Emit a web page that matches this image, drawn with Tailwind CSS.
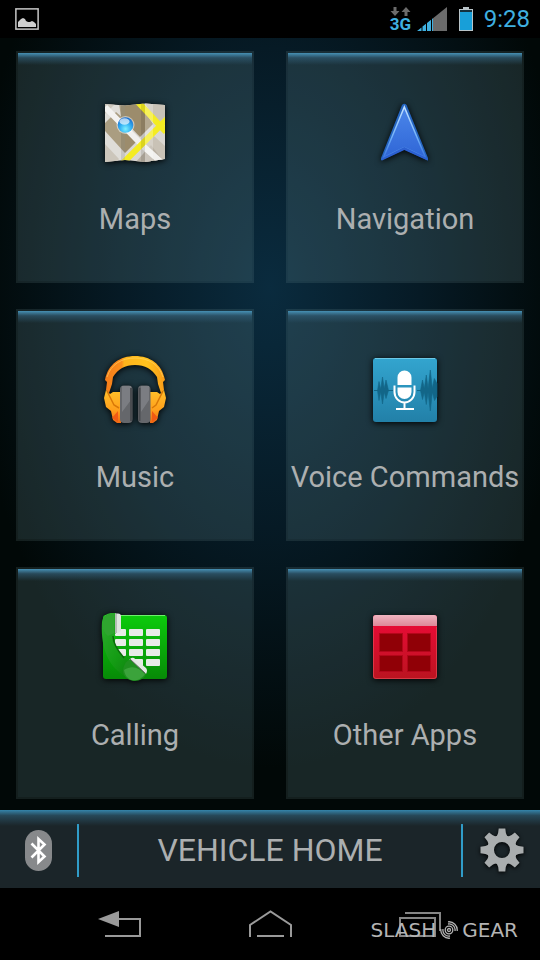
<!DOCTYPE html>
<html lang="en">
<head>
  <meta charset="UTF-8">
  <meta name="viewport" content="width=device-width, initial-scale=1.0">
  <script src="https://cdn.jsdelivr.net/npm/@tailwindcss/browser@4"></script>
  <title>Vehicle Home</title>
</head>
<body class="bg-black font-[Roboto,sans-serif] text-[#acafb0]">
<div class="min-h-screen flex flex-col">

  <!-- Status bar -->
  <header class="h-[38px] bg-black flex justify-between items-center pl-[15px] pr-[10px]">
    <svg class="w-6 h-[22px]" viewBox="0 0 24 22" aria-label="Screenshot saved">
      <rect x="0.5" y="0.5" width="23" height="21" fill="#000" stroke="#777"/>
      <rect x="1" y="1" width="22" height="20" fill="none" stroke="#d0d0d0" stroke-width="1.2"/>
      <path d="M3 19V14l2-2 1-1 2-1 2 1 1 2 2 1h2l2-1 2 1 2 2v3z" fill="#d0d0d0"/>
    </svg>
    <div class="flex items-center">
      <div class="w-[22px] h-6 mr-[5px]">
        <svg class="w-[22px] h-[9px]" viewBox="0 0 22 9" fill="#6b6b6b" aria-hidden="true">
          <path d="M3.500 0h3v4h3L5 9 .5 4h3z"/>
          <path d="M14.500 9h3V5h3L16 0l-4.500 5h3z"/>
        </svg>
        <span class="block text-[17px] leading-4 font-bold text-[#3fb0e0]">3G</span>
      </div>
      <svg class="w-[30px] h-6 mr-3" viewBox="0 0 30 24" aria-label="Signal strength">
        <path d="M16 11.200 30 0v24H16z" fill="#6b6b6b"/>
        <path d="M0 24l4.500-3.600V24zM5.500 19.600 9 16.800V24H5.500zM10 16l4-3.200V24h-4zM15 12l1-.8V24h-1z" fill="#3fb0e0"/>
      </svg>
      <svg class="w-[14px] h-6 mr-[11px]" viewBox="0 0 14 24" aria-label="Battery">
        <path d="M4 0h6v2h4v22H0V2h4z" fill="#b9c4c8"/>
        <rect x="1" y="3" width="12" height="20" fill="#14303c"/>
        <rect x="1" y="5" width="12" height="18" fill="#189fd8"/>
      </svg>
      <time class="text-2xl leading-6 text-[#3fb0e0]">9:28</time>
    </div>
  </header>

  <!-- App tiles -->
  <main class="flex-1 grid grid-cols-2 gap-x-8 gap-y-[26px] px-4 pt-[13px] pb-[11px] bg-[radial-gradient(ellipse_300px_480px_at_50%_250px,#0a2b3e,#061a25_50%,#010807_100%)]">

    <a href="#maps" class="relative flex flex-col items-center pt-11 pb-11 border-2 border-[#8aa]/15 bg-[#6c9196]/22 bg-clip-padding">
      <span class="absolute inset-x-0 top-0 h-3 bg-linear-to-b from-[#4690b4] via-[#33607a]/60 via-40% to-transparent"></span>
      <svg class="w-[72px] h-[72px] drop-shadow-[0_1px_3px_#000]" viewBox="0 0 72 72" aria-hidden="true">
        <defs>
          <clipPath id="mapSheet"><path d="M6 7l20 1.500L46 6.500 66 8v54l-20 3-20-2-20 2z"/></clipPath>
          <radialGradient id="mapPin" cx=".5" cy=".75" r=".7">
            <stop offset="0" stop-color="#7ff0ff"/><stop offset=".5" stop-color="#35b4f5"/><stop offset="1" stop-color="#1a6fd0"/>
          </radialGradient>
        </defs>
        <g clip-path="url(#mapSheet)">
          <path fill="#dad7d2" d="M6 6h60v60H6z"/>
          <path fill="#c4bdb0" d="M6 6h11L6 17zM6 47l14 15-3 4H6z"/>
          <path fill="#9c8c6c" d="M6 26l11-11 9 8 6 10 8 9-14 14-20-22z"/>
          <path fill="#9c8c6c" d="M20 6h20l14 21-13 13-19-20z"/>
          <path fill="#c9c2b6" d="M46 6h20v14l-8 8zM46 48l9-9 11 10v17H46z"/>
          <path fill="#b9b1a4" d="M36 66l16-18 14 18z"/>
          <path stroke="#f1f0ee" stroke-width="6" d="M6 10l36 37M43 48l20 18" fill="none"/>
          <path stroke="#f4ec22" stroke-width="6" d="M22 68l46-46M37 3l30 32" fill="none"/>
          <path fill="#fff" opacity=".15" d="M6 6h20v60H6z"/>
          <path fill="#000" opacity=".1" d="M22 6h4v60h-4zM42 6h4v60h-4z"/>
          <path fill="#fff" opacity=".25" d="M46 6h8v60h-8z"/>
        </g>
        <circle cx="26.500" cy="28" r="9" fill="#fff" opacity=".5"/>
        <circle cx="26.500" cy="28" r="7.800" fill="url(#mapPin)"/>
        <ellipse cx="25.500" cy="24.500" rx="5" ry="3.200" fill="#fff" opacity=".65"/>
      </svg>
      <span class="mt-8 text-[29px] leading-9 whitespace-nowrap">Maps</span>
    </a>

    <a href="#navigation" class="relative flex flex-col items-center pt-11 pb-11 border-2 border-[#8aa]/15 bg-[#6c9196]/22 bg-clip-padding">
      <span class="absolute inset-x-0 top-0 h-3 bg-linear-to-b from-[#4690b4] via-[#33607a]/60 via-40% to-transparent"></span>
      <svg class="w-[72px] h-[72px] drop-shadow-[0_1px_3px_#000]" viewBox="0 0 72 72" aria-hidden="true">
        <defs>
          <linearGradient id="navFill" x2="0" y2="1"><stop offset="0" stop-color="#4b86ea"/><stop offset="1" stop-color="#2f66d6"/></linearGradient>
          <linearGradient id="navEdge" x2="0" y2="1"><stop offset="0" stop-color="#c5e2ff"/><stop offset=".6" stop-color="#6fb0f8"/><stop offset="1" stop-color="#3a74e0"/></linearGradient>
        </defs>
        <path d="M33 8q2.300-2.500 4.600 0L59 61v2.500L35.300 52.500 12 63.500V61z" fill="#2565c0"/>
        <path d="M35.300 10 14.500 60.500 35.300 50.500 56.500 60.500z" fill="url(#navFill)" stroke="url(#navEdge)" stroke-width="1.500"/>
        <path d="M35.300 50 13 61.500V63.500L35.300 53 58.500 63.500V61.500z" fill="#2c60d0"/>
      </svg>
      <span class="mt-8 text-[29px] leading-9 whitespace-nowrap">Navigation</span>
    </a>

    <a href="#music" class="relative flex flex-col items-center pt-11 pb-11 border-2 border-[#8aa]/15 bg-[#6c9196]/22 bg-clip-padding">
      <span class="absolute inset-x-0 top-0 h-3 bg-linear-to-b from-[#4690b4] via-[#33607a]/60 via-40% to-transparent"></span>
      <svg class="w-[72px] h-[72px] drop-shadow-[0_1px_3px_#000]" viewBox="0 0 72 72" aria-hidden="true">
        <defs>
          <linearGradient id="band" x2="1" y2="0"><stop offset="0" stop-color="#f57c1a"/><stop offset=".28" stop-color="#fb8f1c"/><stop offset=".32" stop-color="#ffb41c"/><stop offset=".7" stop-color="#ffc21e"/><stop offset="1" stop-color="#f89a18"/></linearGradient>
          <linearGradient id="cup" x2="0" y2="1"><stop offset="0" stop-color="#ffc02a"/><stop offset=".6" stop-color="#ffa01c"/><stop offset="1" stop-color="#f06a14"/></linearGradient>
        </defs>
        <path d="M6 25C9 9 21 1 36 1s27 8 30 24l-2 2 1 8-3 3-3-9-1-7C53 14 46 10 36 10S19 14 14 22l-1 7-3 9-3-3 1-8z" fill="url(#band)"/>
        <path d="M8 22C12 9 23 3 36 3s24 6 28 19" fill="none" stroke="#ffd968" opacity=".6"/>
        <path d="M7 35l4 4 3-2h8v31h-4l-4-3-2-9-5-4-2-9z" fill="url(#cup)"/>
        <path d="M65 35l-4 4-3-2h-7v31h3l4-3 2-9 5-4 2-9z" fill="url(#cup)"/>
        <path d="M8 36l7 14 5 3M64 36l-7 14-4 3" fill="none" stroke="#d97808" stroke-width="1.500"/>
        <path d="M13 63l6-7v11zM59 63l-6-7v11z" fill="#f05a14"/>
        <rect x="21" y="30.500" width="12.500" height="37.500" rx="4" fill="#65676b"/>
        <rect x="39" y="30.500" width="12.500" height="37.500" rx="4" fill="#65676b"/>
        <path d="M23 31h9v14L23 57zM42 31h8v14l-8 12z" fill="#85878b" opacity=".7"/>
        <path d="M32 33v33M40.500 33v33" stroke="#4a4c50" stroke-width="2"/>
      </svg>
      <span class="mt-8 text-[29px] leading-9 whitespace-nowrap">Music</span>
    </a>

    <a href="#voice" class="relative flex flex-col items-center pt-11 pb-11 border-2 border-[#8aa]/15 bg-[#6c9196]/22 bg-clip-padding">
      <span class="absolute inset-x-0 top-0 h-3 bg-linear-to-b from-[#4690b4] via-[#33607a]/60 via-40% to-transparent"></span>
      <svg class="w-[72px] h-[72px] drop-shadow-[0_1px_3px_#000]" viewBox="0 0 72 72" aria-hidden="true">
        <defs>
          <linearGradient id="voiceFill" x2="0" y2="1"><stop offset="0" stop-color="#33a5cf"/><stop offset="1" stop-color="#2280a8"/></linearGradient>
        </defs>
        <rect x="4" y="3" width="64" height="64" rx="3" fill="url(#voiceFill)"/>
        <path d="M6 3.500h60" stroke="#6cc8e6"/>
        <path d="M5 35.500h19M48 35.500h20" stroke="#126688"/>
        <path d="M8.500 35.500l1.500-9 2 9-2 10zM11.500 35.500l2-13.500 2 13.500-2 13.500zM14.800 35.500l2.200-10.500 2.500 10.500-2.500 8zM51.500 35.500l2-10.500 2.200 10.500-2.200 9zM55 35.500l2.300-15.500 2 15.500-2 14zM58.800 35.500l2.500-20.500 2.200 20.500-2.200 20.500zM62.800 35.500l2.500-12 2.700 5v13l-2.500 4z" fill="#126688" stroke="#126688" stroke-width=".6"/>
        <path d="M28.500 30V22.500a7 7 0 0 1 14 0V30zM28.500 32.500h14V37a7 7 0 0 1-14 0z" fill="#fff"/>
        <path d="M25.500 30.500V37a10 10.500 0 0 0 20 0V30.500M35.500 47.500V54M27 54h18" fill="none" stroke="#fff" stroke-width="2"/>
      </svg>
      <span class="mt-8 text-[29px] leading-9 whitespace-nowrap">Voice Commands</span>
    </a>

    <a href="#calling" class="relative flex flex-col items-center pt-11 pb-11 border-2 border-[#8aa]/15 bg-[#6c9196]/22 bg-clip-padding">
      <span class="absolute inset-x-0 top-0 h-3 bg-linear-to-b from-[#4690b4] via-[#33607a]/60 via-40% to-transparent"></span>
      <svg class="w-[72px] h-[72px] drop-shadow-[0_1px_3px_#000]" viewBox="0 0 72 72" aria-hidden="true">
        <defs>
          <linearGradient id="callFill" x2="0" y2="1"><stop offset="0" stop-color="#0ccb0c"/><stop offset="1" stop-color="#078a07"/></linearGradient>
          <linearGradient id="handset" x2="1" y2="1"><stop offset="0" stop-color="#2fae2f"/><stop offset=".5" stop-color="#149c14"/><stop offset="1" stop-color="#0c6e0c"/></linearGradient>
        </defs>
        <rect x="4" y="2" width="64" height="64" rx="3" fill="url(#callFill)"/>
        <path d="M6 2.500h60" stroke="#6cf06c"/>
        <g fill="#e8ece8">
          <rect x="16" y="16" width="11" height="7" rx="1"/><rect x="30" y="16" width="14" height="7" rx="1"/><rect x="47" y="16" width="14" height="7" rx="1"/>
          <rect x="16" y="26" width="11" height="7" rx="1"/><rect x="30" y="26" width="14" height="7" rx="1"/><rect x="47" y="26" width="14" height="7" rx="1"/>
          <rect x="16" y="36" width="11" height="7" rx="1"/><rect x="30" y="36" width="14" height="7" rx="1"/><rect x="47" y="36" width="14" height="7" rx="1"/>
          <rect x="30" y="46" width="14" height="7" rx="1"/><rect x="47" y="46" width="14" height="7" rx="1"/>
        </g>
        <path d="M3 9C4 2 9-1 17 0v20l-3 3c0 7 5 15 11 22l22 15c-3 6-11 8-17 5C12 57 1 38 3 9z" fill="url(#handset)"/>
        <path d="M14 23c0 7 5 15 11 22" stroke="#0a6a0a" stroke-width="1.500" fill="none"/>
        <path d="M4 9c1-6 5-8 11-8v19l-6 3C5 20 3 15 4 9z" fill="#2fa52f"/>
        <path d="M16 .5h3q3 0 3 3V17q0 2-3 3h-3z" fill="#dfe5df"/>
        <path d="M17 1v19" stroke="#8b958b"/>
        <path d="M31 46l16 13.500c0 5-6 8.500-12 8.500-7-1-11-5-11-10 0-5 3-10 7-12z" fill="#1f8f1f"/>
        <path d="M25 57c8-5 14-3 21 4-6 9-19 9-21-4z" fill="#4fb04f" opacity=".6"/>
        <path d="M31 46q2-2 4-1l12 10q2 2 0 6z" fill="#e4eae4"/>
        <path d="M31 46l15.500 14.500" stroke="#5d6b5d"/>
      </svg>
      <span class="mt-8 text-[29px] leading-9 whitespace-nowrap">Calling</span>
    </a>

    <a href="#apps" class="relative flex flex-col items-center pt-11 pb-11 border-2 border-[#8aa]/15 bg-[#6c9196]/22 bg-clip-padding">
      <span class="absolute inset-x-0 top-0 h-3 bg-linear-to-b from-[#4690b4] via-[#33607a]/60 via-40% to-transparent"></span>
      <svg class="w-[72px] h-[72px] drop-shadow-[0_1px_3px_#000]" viewBox="0 0 72 72" aria-hidden="true">
        <defs>
          <linearGradient id="appsFill" x2="0" y2="1"><stop offset="0" stop-color="#ee0a38"/><stop offset="1" stop-color="#bb1420"/></linearGradient>
          <linearGradient id="appsBar" x2="0" y2="1"><stop offset="0" stop-color="#f0b4c0"/><stop offset="1" stop-color="#dd8898"/></linearGradient>
        </defs>
        <rect x="4" y="2" width="64" height="64" rx="3" fill="url(#appsFill)"/>
        <path d="M4 13V5q0-3 3-3h58q3 0 3 3v8z" fill="url(#appsBar)"/>
        <path d="M4.500 14v49q0 2.500 2.500 2.500h58q2.500 0 2.500-2.500V14" fill="none" stroke="#e8505c" opacity=".6"/>
        <g fill="#900006" stroke="#b4061a">
          <rect x="10.500" y="20.500" width="23" height="18"/><rect x="38.500" y="20.500" width="23" height="18"/>
          <rect x="10.500" y="42.500" width="23" height="16"/><rect x="38.500" y="42.500" width="23" height="16"/>
        </g>
      </svg>
      <span class="mt-8 text-[29px] leading-9 whitespace-nowrap">Other Apps</span>
    </a>
  </main>

  <!-- Dock bar -->
  <section class="relative h-[78px] pt-0.5 bg-[#1b2529] flex items-center">
    <span class="absolute inset-x-0 top-0 h-4 bg-linear-to-b from-[#3484aa] via-[#2b566c]/70 via-35% to-transparent"></span>
    <button type="button" aria-label="Bluetooth" class="w-[77px] flex justify-center">
      <svg class="w-[27px] h-[41px]" viewBox="0 0 27 41">
        <rect width="27" height="41" rx="13.500" fill="#87898b"/>
        <path d="M6.500 13.500 19.500 26.500 13.500 32V9L19.500 14.500 6.500 27.500" fill="none" stroke="#fff" stroke-width="2.600"/>
      </svg>
    </button>
    <span class="w-0.5 h-[53px] bg-[#309cc8]"></span>
    <h1 class="flex-1 text-center text-[32px] leading-10">VEHICLE HOME</h1>
    <span class="w-0.5 h-[53px] bg-[#309cc8]"></span>
    <button type="button" aria-label="Settings" class="w-[77px] flex justify-center">
      <svg class="w-11 h-11 drop-shadow-[0_1px_2px_#000]" viewBox="-22 -22 44 44" fill="#a9adae">
        <path fill-rule="evenodd" d="M0-15a15 15 0 1 0 0 30 15 15 0 1 0 0-30zm0 7a8 8 0 1 1 0 16 8 8 0 1 1 0-16z"/>
        <path id="tooth" d="M-5.500-13Q-3.500-16-3.300-21.500H3.300Q3.500-16 5.500-13z"/>
        <use href="#tooth" transform="rotate(45)"/>
        <use href="#tooth" transform="rotate(90)"/>
        <use href="#tooth" transform="rotate(135)"/>
        <use href="#tooth" transform="rotate(180)"/>
        <use href="#tooth" transform="rotate(225)"/>
        <use href="#tooth" transform="rotate(270)"/>
        <use href="#tooth" transform="rotate(315)"/>
      </svg>
    </button>
  </section>

  <!-- System navigation -->
  <nav class="relative h-[72px] bg-black flex items-center px-[45px]">
    <button type="button" aria-label="Back" class="flex-1 flex justify-center">
      <svg class="w-11 h-7" viewBox="0 0 44 28">
        <path d="M0 9 21 1v16z" fill="#9a9a9a"/>
        <path d="M20 9h22v17H7" fill="none" stroke="#9a9a9a" stroke-width="2"/>
      </svg>
    </button>
    <button type="button" aria-label="Home" class="flex-1 flex justify-center">
      <svg class="w-11 h-7" viewBox="0 0 44 28">
        <path d="M2 27V15L22.500 1.500 43 15v12M9 26h27" fill="none" stroke="#9a9a9a" stroke-width="2"/>
      </svg>
    </button>
    <button type="button" aria-label="Recent apps" class="flex-1 flex justify-center">
      <svg class="w-11 h-7" viewBox="0 0 44 28">
        <path d="M2 8h35v18H2zM7 3h35v18" fill="none" stroke="#858585" stroke-width="2"/>
      </svg>
    </button>
    <!-- Watermark -->
    <div class="absolute right-[22px] top-[30px] flex items-center gap-1 font-['DejaVu_Sans',sans-serif] text-xl leading-6 text-[#b4b4b4]">
      <span>SLASH</span>
      <svg class="w-[18px] h-[18px]" viewBox="0 0 18 18" fill="none" stroke="#b4b4b4" stroke-width="1.300" aria-hidden="true">
        <circle cx="9" cy="9" r="1.500"/>
        <circle cx="9" cy="9" r="3.800"/>
        <path d="M8 3a6 6 0 0 1 7 7M10 15a6 6 0 0 1-7-7M8 .8A8.300 8.300 0 0 1 17.200 10M10 17.200A8.300 8.300 0 0 1 .8 8"/>
      </svg>
      <span>GEAR</span>
    </div>
  </nav>

</div>
</body>
</html>
